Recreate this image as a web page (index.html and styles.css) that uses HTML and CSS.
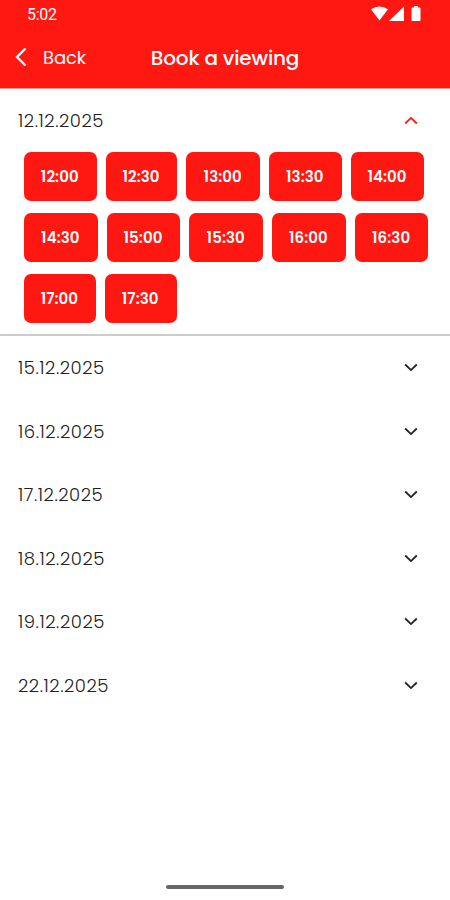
FILE: index.html
```html
<!DOCTYPE html>
<html lang="en">
<head>
    <meta charset="UTF-8">
    <meta name="viewport" content="width=device-width, initial-scale=1.0">
    <title>Book a viewing</title>
    <link rel="stylesheet" href="styles.css">
</head>
<body>
    <header class="header">
        <!-- Status bar -->
        <div class="status-bar">
            <span class="clock">5:02</span>
            <svg class="status-icons" width="50" height="16" viewBox="0 0 50 16" fill="#fff">
                <path d="M0 3.2Q8.5 -2.2 17 3.2L8.5 14.5Z"/>
                <path d="M33 0.5V15H18Z"/>
                <path d="M43 0h4v1.6h1.500q1 0 1 1V14q0 1-1 1H41.500q-1 0-1-1V2.600q0-1 1-1h1.500z"/>
            </svg>
        </div>
        <!-- Navigation -->
        <div class="nav">
            <a class="back">
                <svg width="12" height="20" viewBox="0 0 12 20" fill="none" stroke="#fff" stroke-width="2.4">
                    <path d="M10.500 1.500L2 10L10.500 18.500"/>
                </svg>
                <span class="back-text">Back</span>
            </a>
            <h1 class="title">Book a viewing</h1>
        </div>
    </header>

    <main class="days">
        <section class="day open">
            <div class="day-row">
                <span class="date">12.12.2025</span>
                <svg class="arrow" width="14" height="9" viewBox="0 0 14 9"><path d="M1.200 7.500L7 1.900L12.800 7.500"/></svg>
            </div>
            <div class="slots">
                <button class="slot">12:00</button>
                <button class="slot narrow">12:30</button>
                <button class="slot wide">13:00</button>
                <button class="slot">13:30</button>
                <button class="slot wide">14:00</button>
                <button class="slot wide">14:30</button>
                <button class="slot wide">15:00</button>
                <button class="slot wide">15:30</button>
                <button class="slot wide">16:00</button>
                <button class="slot wide">16:30</button>
                <button class="slot narrow">17:00</button>
                <button class="slot narrow">17:30</button>
            </div>
        </section>
        <section class="day">
            <div class="day-row">
                <span class="date">15.12.2025</span>
                <svg class="arrow" width="14" height="9" viewBox="0 0 14 9"><path d="M1.200 1.500L7 7.100L12.800 1.500"/></svg>
            </div>
        </section>
        <section class="day">
            <div class="day-row">
                <span class="date">16.12.2025</span>
                <svg class="arrow" width="14" height="9" viewBox="0 0 14 9"><path d="M1.200 1.500L7 7.100L12.800 1.500"/></svg>
            </div>
        </section>
        <section class="day">
            <div class="day-row">
                <span class="date">17.12.2025</span>
                <svg class="arrow" width="14" height="9" viewBox="0 0 14 9"><path d="M1.200 1.500L7 7.100L12.800 1.500"/></svg>
            </div>
        </section>
        <section class="day">
            <div class="day-row">
                <span class="date">18.12.2025</span>
                <svg class="arrow" width="14" height="9" viewBox="0 0 14 9"><path d="M1.200 1.500L7 7.100L12.800 1.500"/></svg>
            </div>
        </section>
        <section class="day">
            <div class="day-row">
                <span class="date">19.12.2025</span>
                <svg class="arrow" width="14" height="9" viewBox="0 0 14 9"><path d="M1.200 1.500L7 7.100L12.800 1.500"/></svg>
            </div>
        </section>
        <section class="day">
            <div class="day-row">
                <span class="date">22.12.2025</span>
                <svg class="arrow" width="14" height="9" viewBox="0 0 14 9"><path d="M1.200 1.500L7 7.100L12.800 1.500"/></svg>
            </div>
        </section>
    </main>

    <footer class="home-bar">
        <div class="handle"></div>
    </footer>
</body>
</html>
```
FILE: styles.css
```css
* {
    box-sizing: border-box;
}
body {
    margin: 0;
    height: 900px;
    display: flex;
    flex-direction: column;
    background: #fff;
    color: #222;
    font-family: Poppins, Inter, sans-serif;
    overflow: hidden;
}
.header {
    height: 89px;
    background: #ff1711;
    color: #fff;
    border-bottom: 1px solid #d99a98;
}
.status-bar {
    display: flex;
    justify-content: space-between;
    align-items: center;
    height: 28px;
    padding: 0 29px 0 27px;
}
.clock {
    font-family: Roboto, sans-serif;
    font-size: 16px;
    letter-spacing: -0.3px;
}
.status-icons {
    margin-top: -1px;
}
.nav {
    display: grid;
    grid-template-columns: 1fr auto 1fr;
    align-items: center;
    height: 60px;
    padding: 0 15px;
}
.back {
    display: flex;
    align-items: center;
    gap: 16px;
    margin-top: -2px;
}
.back-text {
    font-size: 18px;
    letter-spacing: -0.1px;
}
.title {
    margin: 0;
    font-size: 20px;
    font-weight: 500;
    letter-spacing: -0.15px;
}
.days {
    flex: 1;
}
.day-row {
    display: flex;
    justify-content: space-between;
    align-items: center;
    height: 63.5px;
    padding: 0 32px 0 18px;
}
.date {
    font-size: 18px;
    font-weight: 300;
    letter-spacing: 0.55px;
}
.arrow {
    fill: none;
    stroke: #222;
    stroke-width: 1.8;
}
.open {
    height: 247px;
    border-bottom: 2px solid #ccc;
}
.open .day-row {
    height: 63px;
}
.open .arrow {
    stroke: #ff1711;
}
.slots {
    display: flex;
    flex-wrap: wrap;
    gap: 12.2px 9px;
    padding: 0 20px 0 24px;
}
.slot {
    width: 72.6px;
    height: 49px;
    padding: 0 1px 0 0;
    border: none;
    border-radius: 7px;
    background: #ff1711;
    color: #fff;
    font-family: inherit;
    font-size: 15px;
    font-weight: 600;
    letter-spacing: 0.1px;
    cursor: pointer;
}
.slot.wide {
    width: 73.7px;
}
.slot.narrow {
    width: 71.8px;
}
.home-bar {
    display: flex;
    justify-content: center;
    height: 15px;
}
.handle {
    width: 118px;
    height: 4px;
    border-radius: 2px;
    background: #666;
}
```
